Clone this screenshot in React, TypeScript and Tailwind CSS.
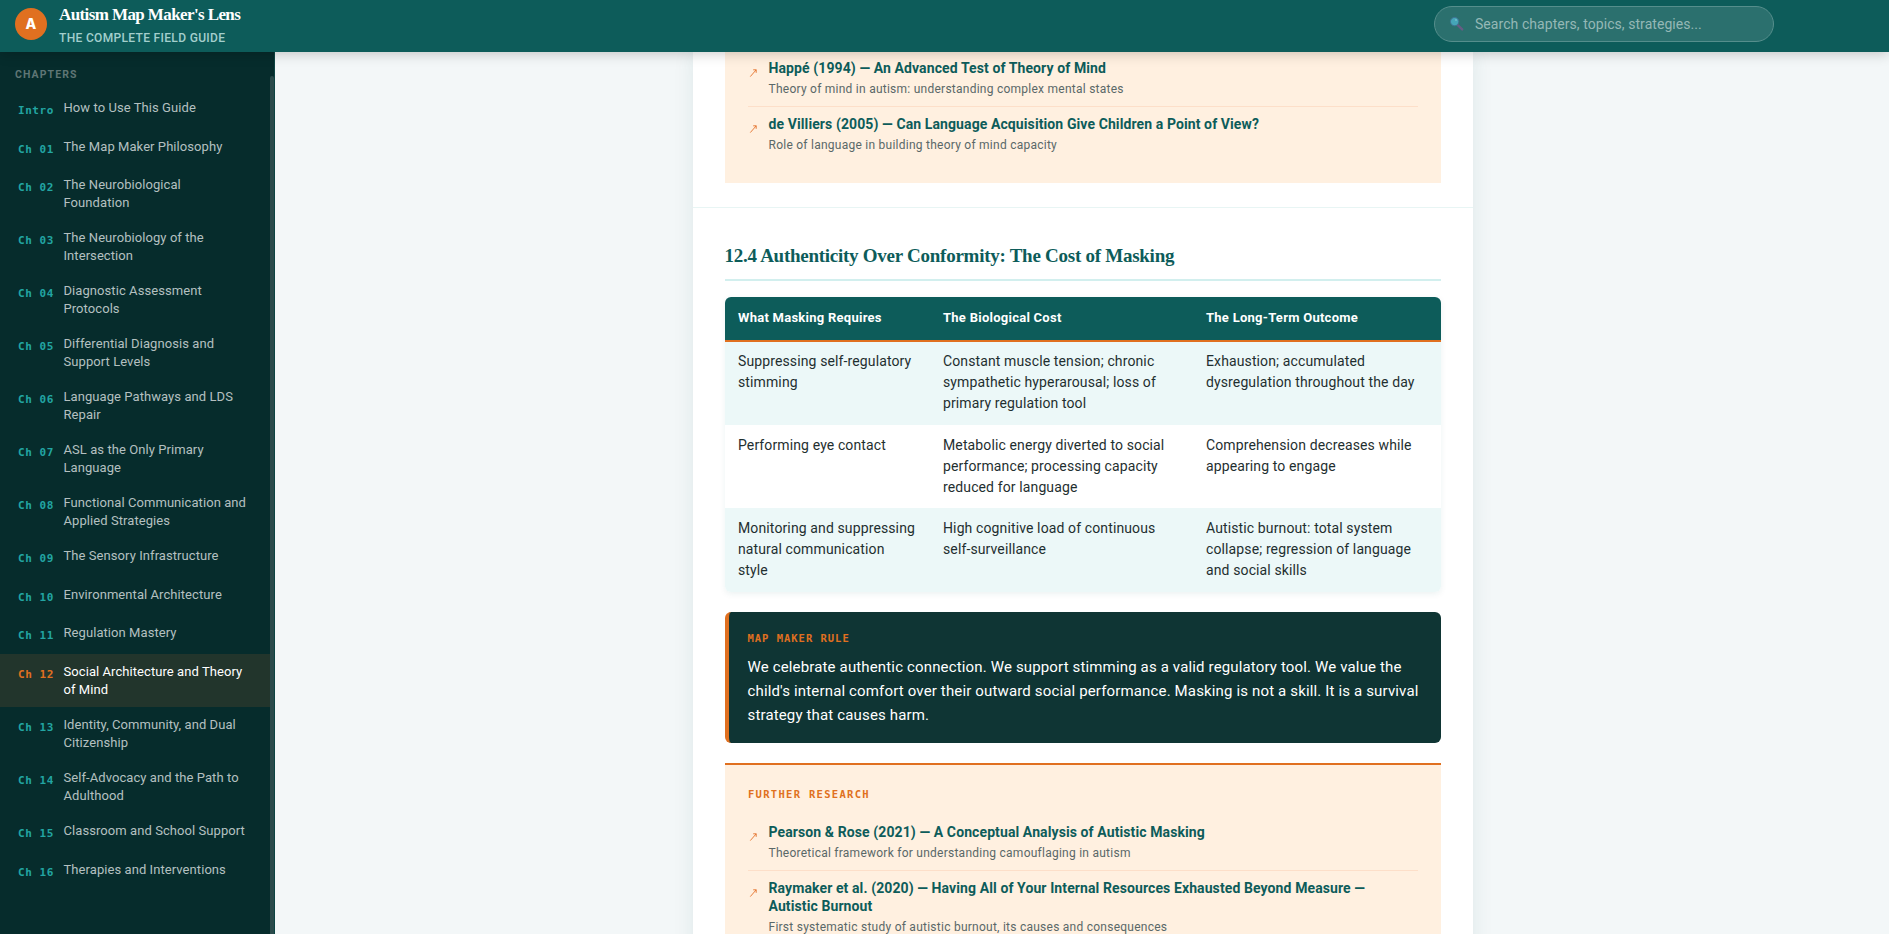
import { Fragment } from "react";

type Chapter = { tag: string; lines: string[]; active?: boolean };
type Source = { title: string[]; note: string };

const chapters: Chapter[] = [
  { tag: "Intro", lines: ["How to Use This Guide"] },
  { tag: "Ch 01", lines: ["The Map Maker Philosophy"] },
  { tag: "Ch 02", lines: ["The Neurobiological", "Foundation"] },
  { tag: "Ch 03", lines: ["The Neurobiology of the", "Intersection"] },
  { tag: "Ch 04", lines: ["Diagnostic Assessment", "Protocols"] },
  { tag: "Ch 05", lines: ["Differential Diagnosis and", "Support Levels"] },
  { tag: "Ch 06", lines: ["Language Pathways and LDS", "Repair"] },
  { tag: "Ch 07", lines: ["ASL as the Only Primary", "Language"] },
  { tag: "Ch 08", lines: ["Functional Communication and", "Applied Strategies"] },
  { tag: "Ch 09", lines: ["The Sensory Infrastructure"] },
  { tag: "Ch 10", lines: ["Environmental Architecture"] },
  { tag: "Ch 11", lines: ["Regulation Mastery"] },
  { tag: "Ch 12", lines: ["Social Architecture and Theory", "of Mind"], active: true },
  { tag: "Ch 13", lines: ["Identity, Community, and Dual", "Citizenship"] },
  { tag: "Ch 14", lines: ["Self-Advocacy and the Path to", "Adulthood"] },
  { tag: "Ch 15", lines: ["Classroom and School Support"] },
  { tag: "Ch 16", lines: ["Therapies and Interventions"] },
];

const headings = ["What Masking Requires", "The Biological Cost", "The Long-Term Outcome"];

const rows: string[][][] = [
  [
    ["Suppressing self-regulatory", "stimming"],
    ["Constant muscle tension; chronic", "sympathetic hyperarousal; loss of", "primary regulation tool"],
    ["Exhaustion; accumulated", "dysregulation throughout the day"],
  ],
  [
    ["Performing eye contact"],
    ["Metabolic energy diverted to social", "performance; processing capacity", "reduced for language"],
    ["Comprehension decreases while", "appearing to engage"],
  ],
  [
    ["Monitoring and suppressing", "natural communication", "style"],
    ["High cognitive load of continuous", "self-surveillance"],
    ["Autistic burnout: total system", "collapse; regression of language", "and social skills"],
  ],
];

const mindSources: Source[] = [
  {
    title: ["Happé (1994) — An Advanced Test of Theory of Mind"],
    note: "Theory of mind in autism: understanding complex mental states",
  },
  {
    title: ["de Villiers (2005) — Can Language Acquisition Give Children a Point of View?"],
    note: "Role of language in building theory of mind capacity",
  },
];

const maskingSources: Source[] = [
  {
    title: ["Pearson & Rose (2021) — A Conceptual Analysis of Autistic Masking"],
    note: "Theoretical framework for understanding camouflaging in autism",
  },
  {
    title: [
      "Raymaker et al. (2020) — Having All of Your Internal Resources Exhausted Beyond Measure —",
      "Autistic Burnout",
    ],
    note: "First systematic study of autistic burnout, its causes and consequences",
  },
];

function Lines({ of }: { of: string[] }) {
  return (
    <>
      {of.map((line, i) => (
        <Fragment key={line}>
          {i > 0 && <br />}
          {line}
        </Fragment>
      ))}
    </>
  );
}

function Header() {
  return (
    <header className="relative z-10 flex h-[52px] shrink-0 justify-between bg-[#0d5c5a] pr-[115px] pl-[15px] shadow-[0_2px_12px_rgba(0,0,0,0.2)]">
      <div className="flex gap-3">
        <div className="mt-2 flex size-8 items-center justify-center rounded-full bg-[#e07020] font-['Inter',sans-serif] text-sm font-extrabold text-white">
          A
        </div>
        <div className="whitespace-nowrap">
          <div className="mt-[5px] font-['Liberation_Serif',serif] text-[17px] leading-5 font-bold tracking-[-0.6px] text-white">
            Autism Map Maker's Lens
          </div>
          <div className="mt-[5px] text-xs leading-4 font-medium tracking-[0.33px] text-[#a3cfcd]">
            THE COMPLETE FIELD GUIDE
          </div>
        </div>
      </div>
      <div className="mt-1.5 flex h-9 w-[340px] items-center rounded-full border border-[#558e8c] bg-[#2b706e] pl-3.5">
        <svg className="size-4 shrink-0" viewBox="0 0 16 16" fill="none">
          <path d="M8.8 9.2 L13.2 13.4" stroke="#665c84" strokeWidth="2.4" strokeLinecap="round" />
          <circle cx="5.6" cy="5.6" r="4.2" fill="#45a5b8" stroke="#3f7394" strokeWidth="1" />
          <circle cx="7" cy="4" r="1" fill="#6fbccb" />
        </svg>
        <span className="ml-[10px] text-sm tracking-[0.06px] whitespace-nowrap text-[#95b8b6]">
          Search chapters, topics, strategies...
        </span>
      </div>
    </header>
  );
}

function Sidebar() {
  return (
    <aside className="flex w-[275px] shrink-0 justify-between border-r border-[#0d4442] bg-[#062c2c]">
      <nav className="flex-1">
        <h2 className="h-[38px] pt-[14px] pl-[15px] text-[10.5px] leading-[17px] font-bold tracking-[1.1px] text-[#5f7675]">
          CHAPTERS
        </h2>
        {chapters.map((c) => (
          <a
            key={c.tag}
            className={`flex pt-[9px] pl-[18px] ${c.lines.length > 1 ? "h-[53px]" : "h-[38.6px]"} ${
              c.active ? "bg-[#22352c]" : ""
            }`}
          >
            <span
              className={`mt-[3px] w-[45.5px] shrink-0 font-['DejaVu_Sans_Mono',monospace] text-[11px] leading-[18px] font-bold tracking-[0.55px] whitespace-nowrap ${
                c.active ? "text-[#e07020]" : "text-[#22a5a2]"
              }`}
            >
              {c.tag}
            </span>
            <span
              className={`text-[13px] leading-[18px] tracking-[0.07px] whitespace-nowrap ${
                c.active ? "text-white" : "text-[#b4c0c0]"
              }`}
            >
              <Lines of={c.lines} />
            </span>
          </a>
        ))}
      </nav>
      <div className="mt-6 w-1 rounded-t-sm bg-[#2b4b4b]" />
    </aside>
  );
}

function SourceList({ items }: { items: Source[] }) {
  return (
    <ul>
      {items.map((s) => (
        <li
          key={s.note}
          className="flex border-b border-[#fddfc9] pt-[8.5px] pb-[6.5px] last:border-b-0"
        >
          <svg className="mt-[10px] mr-[11px] ml-px h-2 w-[9px] shrink-0" viewBox="0 0 9 8" fill="none" stroke="#e4722a" strokeWidth="0.9">
            <path d="M1.3 7.6 L7.2 0.8 M4.2 0.8 H7.2 V3.8" />
          </svg>
          <div className="whitespace-nowrap">
            <div className="text-sm leading-[18px] font-bold tracking-[0.1px] text-[#0d5c5a]">
              <Lines of={s.title} />
            </div>
            <div className="mt-[3.2px] text-xs leading-[19px] tracking-[0.25px] text-[#5a6868]">{s.note}</div>
          </div>
        </li>
      ))}
    </ul>
  );
}

function MaskingTable() {
  return (
    <div className="mt-4 overflow-hidden rounded-md shadow-[0_2px_6px_rgba(13,92,90,0.08)]">
      <div className="grid h-[45px] grid-cols-[205px_263px_248px] border-b-2 border-[#e07020] bg-[#0d5c5a] text-[13px] leading-[41px] font-bold tracking-[0.26px] text-white">
        {headings.map((h) => (
          <div key={h} className="pl-[13.5px]">
            {h}
          </div>
        ))}
      </div>
      {rows.map((row) => (
        <div
          key={row[0][0]}
          className="grid h-[83.2px] grid-cols-[205px_263px_248px] text-sm leading-[21px] tracking-[0.12px] whitespace-nowrap text-[#1f2f30] odd:bg-white even:bg-[#ecf8f8]"
        >
          {row.map((cell) => (
            <div key={cell[0]} className="pt-[9.35px] pl-[13.5px]">
              <Lines of={cell} />
            </div>
          ))}
        </div>
      ))}
    </div>
  );
}

export default function App() {
  return (
    <div className="flex h-[934px] w-[1889px] flex-col overflow-hidden bg-[#f3f7f8] font-['Roboto','Noto_Sans',sans-serif]">
      <Header />
      <div className="flex min-h-0 flex-1">
        <Sidebar />
        <main className="flex flex-1 justify-center overflow-hidden pl-px">
          <article className="w-[780px] shrink-0 self-start bg-white pb-10 shadow-[0_0_20px_rgba(13,92,90,0.09)]">
            <div className="-mt-[1.4px] px-8 pb-6">
              <section className="bg-[#fff0e0] px-[23px] pb-[21px]">
                <SourceList items={mindSources} />
              </section>
            </div>
            <div className="border-t border-[#e8f5f4] px-8">
              <h1 className="h-[73px] border-b-2 border-[#d2efee] pt-9 font-['Liberation_Serif',serif] text-[19px] leading-6 font-bold tracking-[-0.26px] text-[#0d5c5a]">
                12.4 Authenticity Over Conformity: The Cost of Masking
              </h1>
              <MaskingTable />
              <section className="mt-[20.4px] h-[131px] rounded-md border-l-4 border-[#e07020] bg-[#0f3534] pt-[18px] pl-[19px]">
                <h2 className="font-['DejaVu_Sans_Mono',monospace] text-[10.5px] leading-4 font-bold tracking-[0.98px] text-[#e07020]">
                  MAP MAKER RULE
                </h2>
                <p className="mt-[9px] text-[15px] leading-6 tracking-[0.15px] whitespace-nowrap text-white">
                  We celebrate authentic connection. We support stimming as a valid regulatory tool. We value the
                  <br />
                  child's internal comfort over their outward social performance. Masking is not a skill. It is a survival
                  <br />
                  strategy that causes harm.
                </p>
              </section>
              <section className="mt-5 border-t-2 border-[#e07020] bg-[#fff0e0] px-[23px] pt-[21px] pb-5">
                <h2 className="mb-[12.5px] ml-[0.5px] font-['DejaVu_Sans_Mono',monospace] text-[10.5px] leading-4 font-bold tracking-[1.3px] text-[#e07020]">
                  FURTHER RESEARCH
                </h2>
                <SourceList items={maskingSources} />
              </section>
            </div>
          </article>
        </main>
      </div>
    </div>
  );
}
